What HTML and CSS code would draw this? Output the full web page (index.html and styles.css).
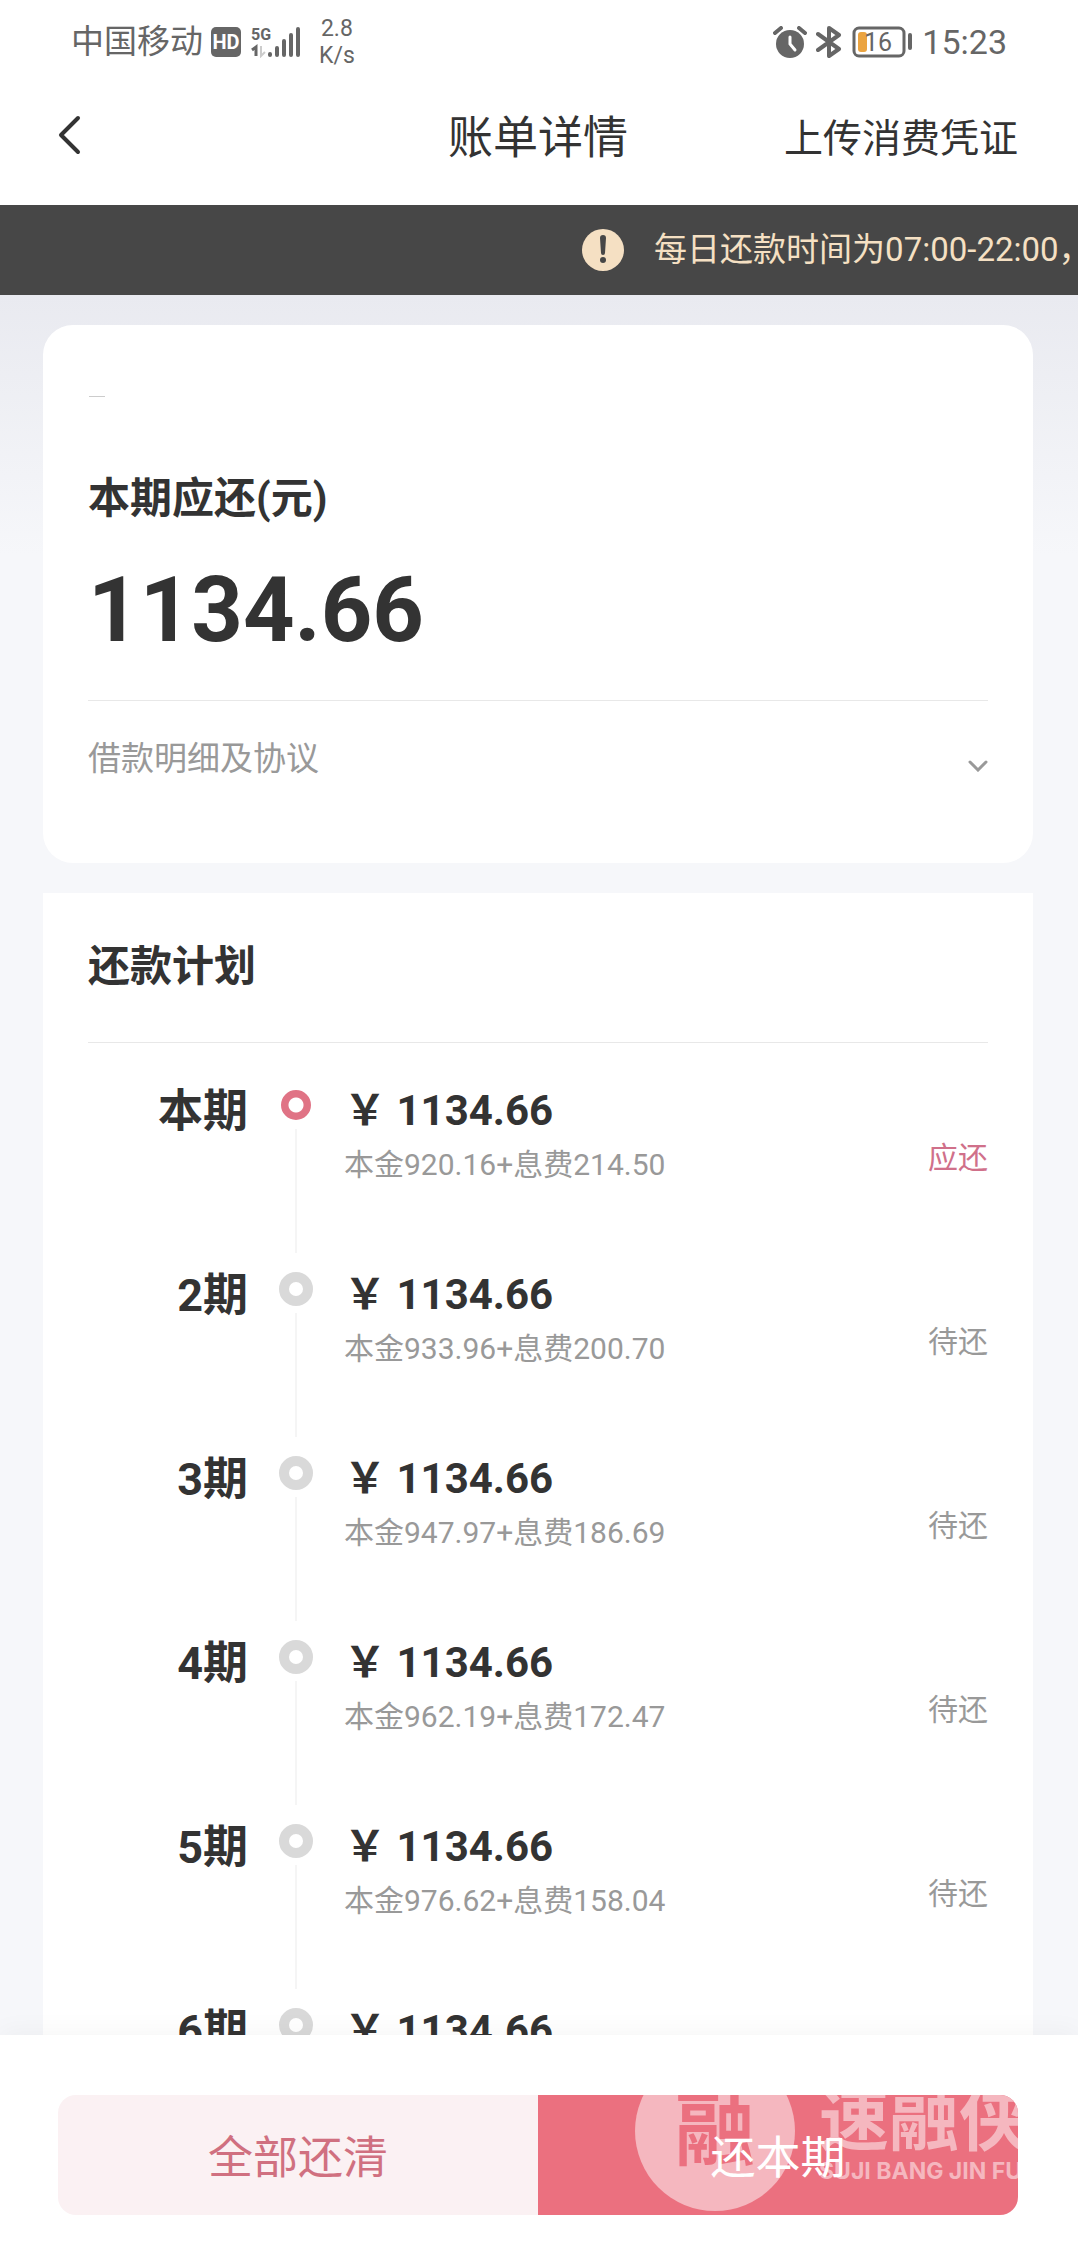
FILE: index.html
```html
<!DOCTYPE html>
<html lang="zh-CN">
<head>
<meta charset="utf-8">
<meta name="viewport" content="width=device-width, initial-scale=1">
<title>账单详情</title>
<link rel="stylesheet" href="styles.css">
</head>
<body>
<div class="status-bar">
  <div class="status-group">
    <span class="carrier">中国移动</span>
    <span class="hd-badge">HD</span>
    <svg class="signal" width="50" height="32" viewBox="0 0 50 32" aria-hidden="true">
      <text class="signal-label" x="0" y="14">5G</text>
      <path d="M1 24l4-3v9" fill="none" stroke="#666" stroke-width="3"/>
      <path d="M10 20v10l4-4" fill="none" stroke="#ccc" stroke-width="2"/>
      <path d="M19 28v1M26 22v7M33 15v14M40 9v20M47 3v26" stroke="#666" stroke-width="4" stroke-linecap="round"/>
    </svg>
    <span class="net-speed"><span>2.8</span><span>K/s</span></span>
  </div>
  <div class="status-group status-right">
    <svg width="34" height="32" viewBox="0 0 34 32" aria-hidden="true">
      <circle cx="17" cy="18" r="14" fill="#666"/>
      <path d="M2 7l6-5M32 7l-6-5" stroke="#666" stroke-width="4" stroke-linecap="round"/>
      <path d="M17 11v7l5 6" fill="none" stroke="#fff" stroke-width="3" stroke-linecap="round"/>
    </svg>
    <svg width="26" height="32" viewBox="0 0 26 32" aria-hidden="true">
      <path d="M2 8l21 15-10 7V2l10 7L2 24" fill="none" stroke="#666" stroke-width="4" stroke-linejoin="round" stroke-linecap="round"/>
    </svg>
    <svg class="battery" width="62" height="32" viewBox="0 0 62 32" aria-hidden="true">
      <rect x="3" y="2" width="50" height="28" rx="5" fill="none" stroke="#666" stroke-width="3"/>
      <rect x="7" y="6" width="9" height="20" rx="3" fill="#eba440"/>
      <path d="M59 9v13" stroke="#666" stroke-width="4" stroke-linecap="round"/>
      <text class="battery-label" x="13" y="25">16</text>
    </svg>
    <span class="clock">15:23</span>
  </div>
</div>

<header class="nav">
  <button class="back" type="button" aria-label="返回">
    <svg width="24" height="40" viewBox="0 0 24 40" aria-hidden="true"><path d="M20 3L3 20l17 17" fill="none" stroke="#333" stroke-width="4" stroke-linecap="round" stroke-linejoin="round"/></svg>
  </button>
  <h1 class="nav-title">账单详情</h1>
  <a class="nav-link" href="#upload">上传消费凭证</a>
</header>

<div class="notice">
  <svg class="notice-icon" width="42" height="42" viewBox="0 0 42 42" aria-hidden="true">
    <circle cx="21" cy="21" r="21" fill="#f5e0c3"/>
    <path d="M18 9a3 3 0 0 1 6 0l-1 15a2 2 0 0 1-4 0z" fill="#474747"/>
    <circle cx="21" cy="31" r="3" fill="#474747"/>
  </svg>
  <span>每日还款时间为07:00-22:00，</span>
</div>

<main class="content">
  <section class="card due">
    <div class="due-mark"></div>
    <h2 class="section-title">本期应还(元)</h2>
    <p class="due-amount">1134.66</p>
    <button class="detail-toggle" type="button">
      <span>借款明细及协议</span>
      <svg width="20" height="12" viewBox="0 0 20 12" aria-hidden="true"><path d="M2 2l8 8 8-8" fill="none" stroke="#999" stroke-width="3" stroke-linecap="round"/></svg>
    </button>
  </section>

  <section class="plan">
    <h2 class="section-title plan-title">还款计划</h2>
    <ol class="periods">
      <li class="period current">
        <span class="period-name">本期</span>
        <span class="rail"><span class="ring"></span><span class="line"></span></span>
        <div class="period-body"><p class="amount">￥ 1134.66</p><p class="breakdown">本金920.16+息费214.50</p></div>
        <span class="state">应还</span>
      </li>
      <li class="period">
        <span class="period-name">2期</span>
        <span class="rail"><span class="ring"></span><span class="line"></span></span>
        <div class="period-body"><p class="amount">￥ 1134.66</p><p class="breakdown">本金933.96+息费200.70</p></div>
        <span class="state">待还</span>
      </li>
      <li class="period">
        <span class="period-name">3期</span>
        <span class="rail"><span class="ring"></span><span class="line"></span></span>
        <div class="period-body"><p class="amount">￥ 1134.66</p><p class="breakdown">本金947.97+息费186.69</p></div>
        <span class="state">待还</span>
      </li>
      <li class="period">
        <span class="period-name">4期</span>
        <span class="rail"><span class="ring"></span><span class="line"></span></span>
        <div class="period-body"><p class="amount">￥ 1134.66</p><p class="breakdown">本金962.19+息费172.47</p></div>
        <span class="state">待还</span>
      </li>
      <li class="period">
        <span class="period-name">5期</span>
        <span class="rail"><span class="ring"></span><span class="line"></span></span>
        <div class="period-body"><p class="amount">￥ 1134.66</p><p class="breakdown">本金976.62+息费158.04</p></div>
        <span class="state">待还</span>
      </li>
      <li class="period">
        <span class="period-name">6期</span>
        <span class="rail"><span class="ring"></span></span>
        <div class="period-body"><p class="amount">￥ 1134.66</p></div>
      </li>
    </ol>
  </section>
</main>

<footer class="actions">
  <button class="action action-all" type="button">全部还清</button>
  <button class="action action-current" type="button">
    <span class="brand" aria-hidden="true">
      <span class="brand-seal">融</span>
      <span class="brand-text"><span class="brand-name">速融侠</span><span class="brand-latin">SUJI BANG JIN FU</span></span>
    </span>
    <span class="action-label">还本期</span>
  </button>
</footer>
</body>
</html>
```
FILE: styles.css
```css
* {
  box-sizing: border-box;
  margin: 0;
  padding: 0;
}

body {
  display: flex;
  flex-direction: column;
  height: 100vh;
  background: #fff;
  color: #333;
  font-family: Roboto, "Noto Sans CJK SC", sans-serif;
}

button {
  border: 0;
  background: none;
  color: inherit;
  font: inherit;
  cursor: pointer;
}

/* System status bar */
.status-bar {
  display: flex;
  flex: none;
  justify-content: space-between;
  align-items: center;
  height: 84px;
  padding: 0 71px;
  color: #666;
}

.status-group {
  display: flex;
  align-items: center;
}

.status-right {
  gap: 9px;
}

.carrier {
  font-size: 33px;
  line-height: 40px;
}

.hd-badge {
  width: 30px;
  height: 30px;
  margin: 0 10px 0 8px;
  border-radius: 5px;
  background: #666;
  color: #fff;
  font-size: 20px;
  font-weight: 700;
  line-height: 30px;
  text-align: center;
}

.signal-label {
  fill: #666;
  font-size: 16px;
  font-weight: 700;
}

.net-speed {
  display: flex;
  flex-direction: column;
  margin-left: 18px;
  font-size: 23px;
  line-height: 27px;
  text-align: center;
}

.battery-label {
  fill: #666;
  font-size: 25px;
}

.clock {
  font-size: 34px;
  line-height: 40px;
}

/* Title bar */
.nav {
  display: grid;
  flex: none;
  grid-template-columns: 1fr auto 1fr;
  align-items: center;
  height: 121px;
  padding: 0 60px 12px 58px;
}

.back {
  display: flex;
  justify-self: start;
  padding-bottom: 8px;
}

.nav-title {
  font-size: 45px;
  font-weight: 400;
  line-height: 60px;
}

.nav-link {
  justify-self: end;
  color: inherit;
  font-size: 39px;
  line-height: 60px;
  text-decoration: none;
}

.notice {
  display: flex;
  flex: none;
  align-items: center;
  gap: 30px;
  height: 90px;
  padding-left: 54%;
  overflow: hidden;
  background: #474747;
  color: #f5e0c3;
  font-size: 33px;
  line-height: 40px;
  white-space: nowrap;
}

.notice-icon {
  flex: none;
}

/* Scrolling content */
.content {
  display: flex;
  flex: 1;
  flex-direction: column;
  gap: 30px;
  min-height: 0;
  padding: 30px 45px 0 43px;
  overflow-y: auto;
  scrollbar-width: none;
  background: linear-gradient(#e9eaf0, #f6f7fa 260px);
}

.card,
.plan {
  flex: none;
  padding: 0 45px;
  background: #fff;
}

.card {
  border-radius: 30px;
}

.section-title {
  font-size: 42px;
  font-weight: 700;
  line-height: 62px;
}

.due {
  padding-top: 71px;
}

.due-mark {
  width: 16px;
  height: 1px;
  margin: 0 0 71px 1px;
  background: #ccc;
}

.due-amount {
  margin-top: 30px;
  font-size: 90px;
  font-weight: 700;
  line-height: 102px;
}

.detail-toggle {
  display: flex;
  justify-content: space-between;
  align-items: center;
  width: 100%;
  margin-top: 38px;
  padding: 28px 0 74px;
  border-top: 1px solid #e8e8e8;
  color: #999;
  font-size: 33px;
  line-height: 60px;
}

.detail-toggle svg {
  margin-top: 14px;
}

.plan-title {
  padding: 43px 0 44px;
  border-bottom: 1px solid #e8e8e8;
}

.periods {
  padding-top: 45px;
  list-style: none;
}

.period {
  display: grid;
  grid-template-columns: 160px 96px 1fr auto;
  height: 184px;
}

.period-name {
  font-size: 45px;
  font-weight: 700;
  line-height: 48px;
  text-align: right;
}

.rail {
  display: flex;
  flex-direction: column;
  align-items: center;
}

.ring {
  width: 34px;
  height: 34px;
  border: 10px solid #d9d9d9;
  border-radius: 50%;
}

.current .ring {
  border: 2px solid #fff;
  background: radial-gradient(#fff 7px, #e07385 8px);
}

.line {
  width: 2px;
  height: 124px;
  margin-top: 7px;
  background: #f5f5f5;
}

.amount {
  font-size: 42px;
  font-weight: 700;
  line-height: 46px;
}

.breakdown {
  margin-top: 11px;
  color: #999;
  font-size: 30px;
  line-height: 40px;
}

.state {
  padding-top: 50px;
  color: #999;
  font-size: 30px;
  line-height: 40px;
}

.current .state {
  color: #d0708a;
}

/* Bottom actions */
.actions {
  z-index: 1;
  display: grid;
  flex: none;
  grid-template-columns: 1fr 1fr;
  padding: 60px 60px 34px 58px;
  background: #fff;
  box-shadow: 0 -4px 24px rgba(0, 0, 0, 0.04);
}

.action {
  height: 120px;
  padding-top: 8px;
  font-size: 45px;
  line-height: 60px;
}

.action-all {
  border-radius: 18px 0 0 18px;
  background: #fbf1f3;
  color: #d07080;
}

.action-current {
  position: relative;
  overflow: hidden;
  border-radius: 0 18px 18px 0;
  background: #eb707f;
  color: #fff;
}

.action-label {
  position: relative;
}

/* Brand mark laid over the button */
.brand {
  position: absolute;
  top: -44px;
  left: 97px;
  display: flex;
  gap: 24px;
  color: #f5b7bf;
  font-weight: 700;
  white-space: nowrap;
}

.brand-seal {
  width: 160px;
  height: 160px;
  border-radius: 50%;
  background: #f5b7bf;
  color: #eb707f;
  font-size: 80px;
  line-height: 160px;
}

.brand-text {
  display: flex;
  flex-direction: column;
  padding-top: 32px;
  text-align: left;
}

.brand-name {
  font-size: 70px;
  line-height: 76px;
}

.brand-latin {
  font-family: Inter, Roboto, sans-serif;
  font-size: 23px;
  line-height: 24px;
}
```
